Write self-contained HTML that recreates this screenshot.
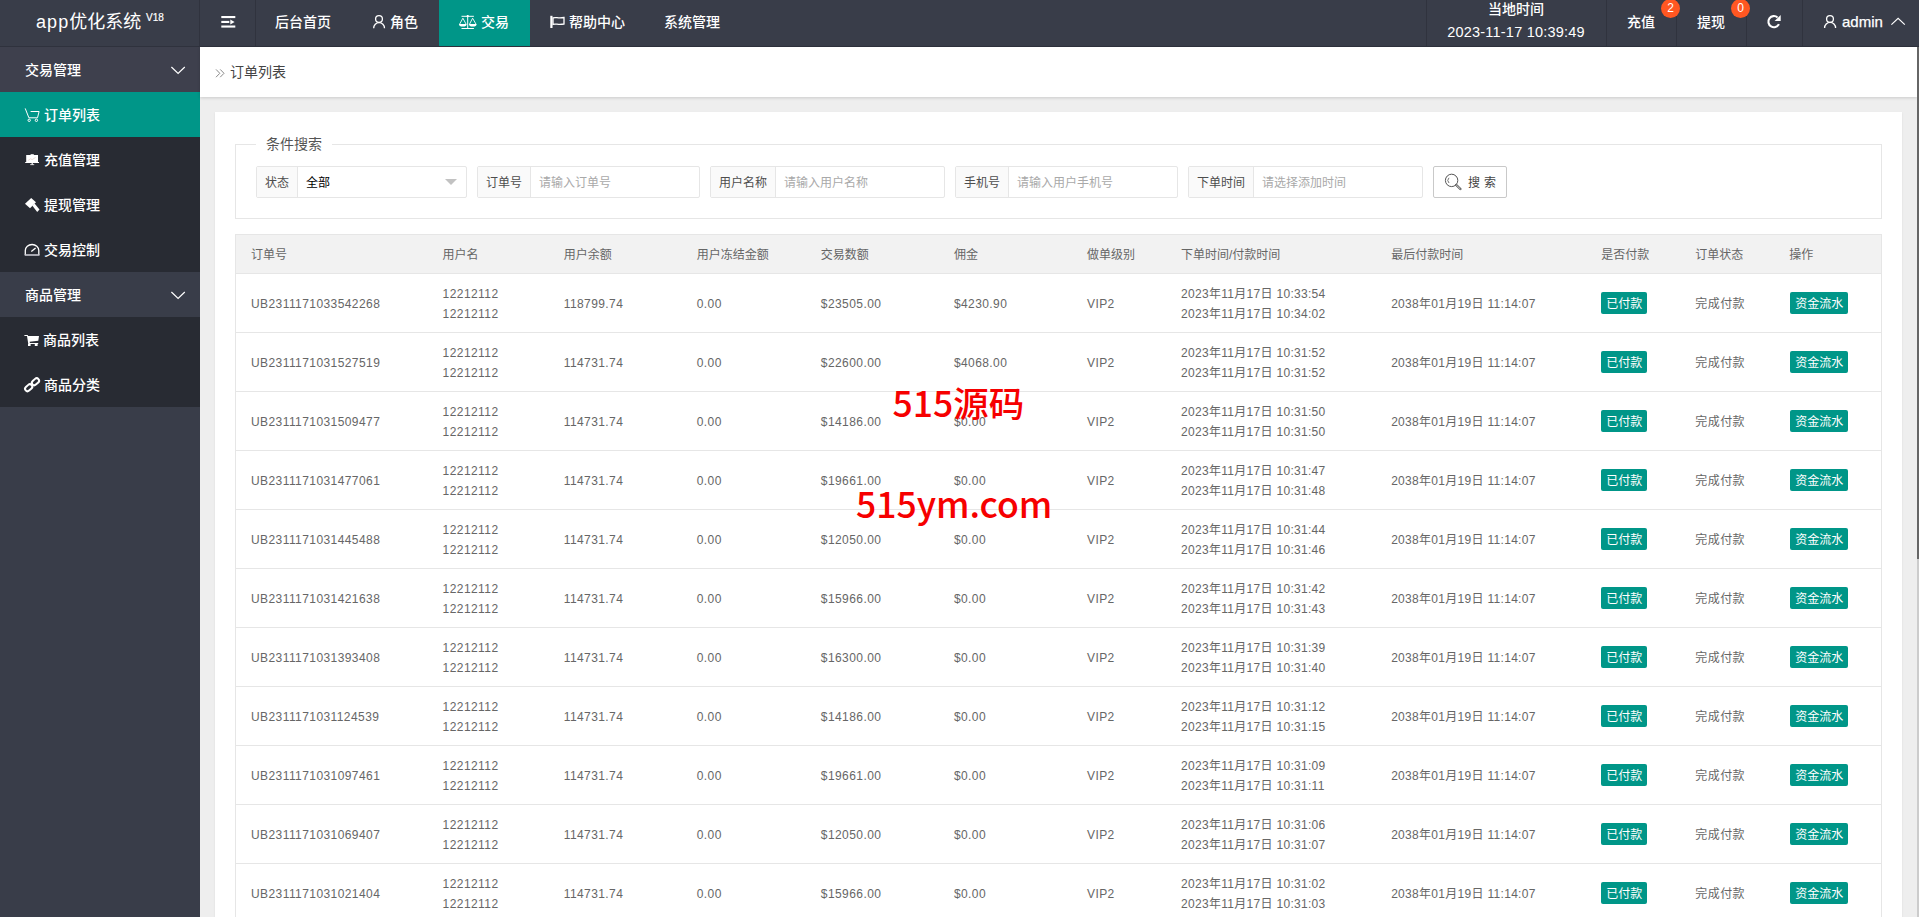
<!DOCTYPE html>
<html lang="zh-CN">
<head>
<meta charset="utf-8">
<title>订单列表</title>
<style>
*{box-sizing:border-box;margin:0;padding:0}
html,body{width:1919px;height:917px;overflow:hidden}
body{font-family:"Liberation Sans","Noto Sans CJK SC",sans-serif;font-size:14px;color:#333;background:#eee;position:relative}
svg{display:block}
/* header */
.hd{position:absolute;left:0;top:0;width:1919px;height:47px;background:#393d49;color:#fff;border-bottom:1px solid #2f323d}
.logo{position:absolute;left:0;top:0;width:200px;height:46px;border-right:1px solid #30333e;line-height:44px;font-size:18px;white-space:nowrap}
.logo span.t{position:absolute;left:36px;top:0}
.logo sup{position:absolute;left:146px;top:-4px;font-size:10px;font-weight:normal;-webkit-text-stroke:.2px #fff;line-height:44px}
.nav{position:absolute;top:0;height:46px;line-height:44px;font-size:14px;white-space:nowrap;font-weight:500}
.nav .ic{position:absolute}
.sep{position:absolute;top:0;width:1px;height:46px;background:#30333e}
.act{position:absolute;top:0;height:46px;background:#009688}
.badge{position:absolute;width:19px;height:19px;border-radius:10px;background:#ff5722;color:#fff;font-size:12px;line-height:19px;text-align:center}
/* side */
.side{position:absolute;left:0;top:47px;width:200px;height:870px;background:#393d49;color:#fff;font-weight:500}
.side .it{position:absolute;left:0;width:200px;height:45px;line-height:46px;font-size:14px;white-space:nowrap}
.side .p{background:#3e404d}
.side .c{background:#282b33}
.side .on{background:#009688}
.side .it span{position:absolute;top:0}
.side .it svg{position:absolute}
/* crumb */
.crumb{position:absolute;left:200px;top:47px;width:1717px;height:50px;background:#fff;box-shadow:0 1px 3px rgba(0,0,0,.15);line-height:51px;font-size:14px;color:#444}
.crumb span{position:absolute;left:30px;top:0}
.sb{position:absolute;left:1917px;top:47px;width:2px;height:870px;background:#ccc}
.sb i{display:block;width:2px;height:512px;background:#666}
/* card */
.card{position:absolute;left:215px;top:112px;width:1687px;height:820px;background:#fff;box-shadow:0 1px 2px rgba(0,0,0,.08)}
.fs{position:absolute;left:20px;top:32px;width:1647px;height:75px;border:1px solid #e6e6e6}
.lg{position:absolute;left:20px;top:-12px;background:#fff;padding:0 10px;font-size:14px;line-height:22px;color:#555}
.grp{position:absolute;top:21px;height:32px;border:1px solid #e6e6e6;border-radius:2px;background:#fff;font-size:12px;line-height:33px;white-space:nowrap}
.grp .lb{position:absolute;left:0;top:0;height:30px;overflow:hidden;background:#fafafa;border-right:1px solid #e6e6e6;padding:0 8px;color:#4d4d4d}
.grp .ph{position:absolute;top:0;color:#a9a9a9}
.grp .val{position:absolute;top:0;color:#000}
.sbtn{position:absolute;left:1197px;top:21px;width:74px;height:32px;border:1px solid #c9c9c9;border-radius:2px;background:#fff;font-size:12px;line-height:33px;color:#444}
/* table */
table{position:absolute;left:20px;top:122px;width:1647px;border-collapse:collapse;table-layout:fixed;border:1px solid #e6e6e6}
th{height:39px;background:#f2f2f2;font-weight:normal;text-align:left;font-size:12px;color:#666;padding:0 15px 2px;border-bottom:1px solid #e6e6e6;white-space:nowrap}
td{height:59px;padding:10px 15px 8px;font-size:12px;letter-spacing:.42px;line-height:20px;color:#666;border-bottom:1px solid #e6e6e6;white-space:nowrap;vertical-align:middle}
td.d{letter-spacing:.3px}
.btn{display:inline-block;position:relative;top:-1px;height:22px;line-height:25px;letter-spacing:0;padding:0 5px;background:#009688;color:#fff;font-size:12px;border-radius:2px;vertical-align:middle}
.wm{position:absolute;color:#f60000;font-family:"Noto Sans CJK SC","Liberation Sans",sans-serif;font-weight:500;white-space:nowrap}
</style>
</head>
<body>
<div class="hd">

  <svg class="ic" style="position:absolute;left:0;top:0;z-index:5" width="1919" height="47" viewBox="0 0 1919 47">
    <g fill="#fff">
      <rect x="221.3" y="16" width="14" height="2.1"/>
      <rect x="221.3" y="20.9" width="8" height="2.1"/>
      <rect x="221.3" y="25.5" width="14" height="2.1"/>
      <path d="M230.3 19.6 L234.6 22 L230.3 24.4 Z"/>
    </g>
    <g fill="none" stroke="#fff" stroke-width="1.3">
      <circle cx="379" cy="19" r="3.4"/>
      <path d="M373.7 28.2 A5.4 5.6 0 0 1 384.5 28.2"/>
      <circle cx="1830" cy="19" r="3.4"/>
      <path d="M1824.6 28 A5.5 5.6 0 0 1 1835.6 28"/>
      <path d="M1891.4 24.6 L1898.1 18.4 L1904.8 24.6" stroke-width="1.2"/>
    </g>
    <!-- scales -->
    <g fill="none" stroke="#fff" stroke-width="1">
      <path d="M461.5 16.3 H473.9 M467.7 15 V28.4 M461.5 28.5 H473.9"/>
      <path d="M459.6 24.2 L462.9 18.2 L466.1 24.2 M469.5 24.2 L472.6 18.2 L476 24.2" stroke-width="0.9"/>
    </g>
    <g fill="#fff">
      <path d="M459 24 H466.6 A3.8 2.6 0 0 1 459 24 Z M469 24 H476.6 A3.8 2.6 0 0 1 469 24 Z"/>
      <circle cx="467.7" cy="16.2" r="1.1"/>
    </g>
    <!-- flag -->
    <rect x="550.3" y="15.8" width="2.2" height="12.2" fill="#fff"/>
    <path d="M553 17.9 C556 16.8 558 18.8 564 17.5 V24 C558 25.3 556 23.3 553 24.4 Z" fill="none" stroke="#fff" stroke-width="1.3"/>
    <!-- refresh -->
    <path d="M1777.56 17.43 A5.55 5.55 0 1 0 1778.9 24.1" fill="none" stroke="#fff" stroke-width="2.1"/>
    <path d="M1780.7 15.1 V21.1 H1774.6 Z" fill="#fff"/>
  </svg>
  <div class="logo"><span class="t"><span style="letter-spacing:1.1px">app</span>优化系统</span><sup>V18</sup></div>
  <div class="sep" style="left:255px"></div>
  <div class="act" style="left:439px;width:91px"></div>
  <div class="nav" style="left:275px">后台首页</div>
  <div class="nav" style="left:390px">角色</div>
  <div class="nav" style="left:481px">交易</div>
  <div class="nav" style="left:569px">帮助中心</div>
  <div class="nav" style="left:664px">系统管理</div>
  <div class="sep" style="left:1426px"></div>
  <div class="sep" style="left:1606px"></div>
  <div class="sep" style="left:1676px"></div>
  <div class="sep" style="left:1746px"></div>
  <div class="sep" style="left:1802px"></div>
  <div class="nav" style="left:1426px;width:180px;text-align:center;line-height:18px;top:0">当地时间</div>
  <div class="nav" style="left:1426px;width:180px;text-align:center;line-height:18px;top:23px;font-size:14.5px;letter-spacing:.22px">2023-11-17 10:39:49</div>
  <div class="nav" style="left:1627px">充值</div>
  <div class="nav" style="left:1697px">提现</div>
  <div class="badge" style="left:1661px;top:-1px">2</div>
  <div class="badge" style="left:1731px;top:-1px">0</div>
  <div class="nav" style="left:1842px;font-size:15px;-webkit-text-stroke:.25px #fff">admin</div>
</div>

<div class="side">
  <svg style="position:absolute;left:0;top:0;z-index:5" width="200" height="420" viewBox="0 47 200 420">
    <g fill="none" stroke="#fff" stroke-width="1.2">
      <path d="M171.4 67 L178.1 73.4 L184.8 67"/>
      <path d="M171.4 292 L178.1 298.4 L184.8 292"/>
    </g>
    <!-- cart outline -->
    <g fill="none" stroke="#fff" stroke-width="1">
      <path d="M25.2 108.4 L28.9 117.8 H37.5 L39.1 111.5 H30.6"/>
      <circle cx="29.2" cy="120.3" r="1.2"/>
      <circle cx="36.4" cy="120.3" r="1.2"/>
    </g>
    <!-- board -->
    <g fill="#fff">
      <rect x="26.2" y="155" width="11.8" height="7.4"/>
      <rect x="25.2" y="162" width="13.8" height="1"/>
      <rect x="30.6" y="154.2" width="3.2" height="1"/>
      <rect x="31.6" y="163" width="1.2" height="1.6"/>
      <rect x="30.2" y="164.3" width="4" height="0.8"/>
    </g>
    <path d="M28.2 160.4 L30.4 158.8 L32.2 159.6 L35.6 157.4" fill="none" stroke="#d9b8b0" stroke-width="0.5"/>
    <!-- gavel -->
    <g fill="#fff">
      <path d="M25 203.8 L31.2 197.9 L36 202.3 L30 208.2 Z"/>
      <path d="M32.2 205.4 L34.6 203.6 L39.5 209.4 L37.2 212 Z"/>
    </g>
    <!-- gauge -->
    <path d="M25.3 255 V250.6 A6.75 6.1 0 0 1 38.8 250.6 V255" fill="none" stroke="#fff" stroke-width="1.3"/>
    <rect x="24.7" y="254.2" width="14.8" height="1.6" fill="#c9c7cf"/>
    <path d="M31.3 251.5 L35.6 248" fill="none" stroke="#fff" stroke-width="1.3"/>
    <!-- cart solid -->
    <g fill="#fff">
      <path d="M24.4 334.9 H27.6 L28.2 336 H39 L38.3 340.8 L29.6 341.8 L29.9 342.9 H38.2 V344 H28.3 L27 336 H24.4 Z"/>
      <rect x="28" y="344" width="2.6" height="2"/>
      <rect x="34.8" y="344" width="2.8" height="2"/>
    </g>
    <!-- link -->
    <g fill="none" stroke="#fff" stroke-width="2">
      <rect x="-3.9" y="-2.4" width="8" height="4.8" rx="2.4" transform="translate(28.6 387.8) rotate(-42)"/>
      <rect x="-3.9" y="-2.4" width="8" height="4.8" rx="2.4" transform="translate(35.4 381.8) rotate(-42)"/>
    </g>
  </svg>

  <div class="it p" style="top:0"><span style="left:25px">交易管理</span></div>
  <div class="it c on" style="top:45px"><span style="left:44px">订单列表</span></div>
  <div class="it c" style="top:90px"><span style="left:44px">充值管理</span></div>
  <div class="it c" style="top:135px"><span style="left:44px">提现管理</span></div>
  <div class="it c" style="top:180px"><span style="left:44px">交易控制</span></div>
  <div class="it" style="top:225px"><span style="left:25px">商品管理</span></div>
  <div class="it c" style="top:270px"><span style="left:43px">商品列表</span></div>
  <div class="it c" style="top:315px"><span style="left:44px">商品分类</span></div>
</div>

<div class="crumb"><svg style="position:absolute;left:0;top:0" width="40" height="50" viewBox="200 47 40 50"><path d="M216 69.4 L219.8 73.3 L216 77.2 M220.2 69.4 L224 73.3 L220.2 77.2" fill="none" stroke="#8a8a8a" stroke-width="1"/></svg><span>订单列表</span></div>
<div class="sb"><i></i></div>

<div class="card">
  <div class="fs">
    <div class="lg">条件搜索</div>
    <div class="grp" style="left:20px;width:211px"><div class="lb">状态</div><div class="val" style="left:49px">全部</div><i style="position:absolute;left:188px;top:12px;border:6px solid transparent;border-top-color:#c2c2c2;border-bottom:0"></i></div>
    <div class="grp" style="left:241px;width:223px"><div class="lb">订单号</div><div class="ph" style="left:61px">请输入订单号</div></div>
    <div class="grp" style="left:474px;width:235px"><div class="lb">用户名称</div><div class="ph" style="left:73px">请输入用户名称</div></div>
    <div class="grp" style="left:719px;width:223px"><div class="lb">手机号</div><div class="ph" style="left:61px">请输入用户手机号</div></div>
    <div class="grp" style="left:952px;width:235px"><div class="lb">下单时间</div><div class="ph" style="left:73px">请选择添加时间</div></div>
    <div class="sbtn"><svg style="position:absolute;left:-1px;top:-1px" width="74" height="32" viewBox="1433 166 74 32"><circle cx="1451.6" cy="180.4" r="6.2" fill="none" stroke="#555" stroke-width="1"/><path d="M1449 177.8 A3.7 3.7 0 0 0 1449 183" fill="none" stroke="#666" stroke-width="0.9"/><path d="M1456.3 185 L1460.4 189" fill="none" stroke="#555" stroke-width="2.4" stroke-linecap="round"/><path d="M1456.5 185.2 L1460.2 188.8" fill="none" stroke="#fff" stroke-width="0.8" stroke-linecap="round"/></svg><span style="position:absolute;left:34px;top:0;letter-spacing:4px">搜索</span></div>
  </div>
  <table>
    <colgroup><col style="width:192px"><col style="width:121px"><col style="width:133px"><col style="width:124px"><col style="width:133px"><col style="width:133px"><col style="width:94px"><col style="width:210px"><col style="width:210px"><col style="width:94px"><col style="width:94px"><col style="width:107px"></colgroup>
    <thead><tr><th>订单号</th><th>用户名</th><th>用户余额</th><th>用户冻结金额</th><th>交易数额</th><th>佣金</th><th>做单级别</th><th>下单时间/付款时间</th><th>最后付款时间</th><th>是否付款</th><th>订单状态</th><th>操作</th></tr></thead>
    <tbody>
<tr><td>UB2311171033542268</td><td>12212112<br>12212112</td><td>118799.74</td><td>0.00</td><td>$23505.00</td><td>$4230.90</td><td>VIP2</td><td class="d">2023年11月17日 10:33:54<br>2023年11月17日 10:34:02</td><td class="d">2038年01月19日 11:14:07</td><td><span class="btn">已付款</span></td><td>完成付款</td><td><span class="btn" style="left:1px">资金流水</span></td></tr>
<tr><td>UB2311171031527519</td><td>12212112<br>12212112</td><td>114731.74</td><td>0.00</td><td>$22600.00</td><td>$4068.00</td><td>VIP2</td><td class="d">2023年11月17日 10:31:52<br>2023年11月17日 10:31:52</td><td class="d">2038年01月19日 11:14:07</td><td><span class="btn">已付款</span></td><td>完成付款</td><td><span class="btn" style="left:1px">资金流水</span></td></tr>
<tr><td>UB2311171031509477</td><td>12212112<br>12212112</td><td>114731.74</td><td>0.00</td><td>$14186.00</td><td>$0.00</td><td>VIP2</td><td class="d">2023年11月17日 10:31:50<br>2023年11月17日 10:31:50</td><td class="d">2038年01月19日 11:14:07</td><td><span class="btn">已付款</span></td><td>完成付款</td><td><span class="btn" style="left:1px">资金流水</span></td></tr>
<tr><td>UB2311171031477061</td><td>12212112<br>12212112</td><td>114731.74</td><td>0.00</td><td>$19661.00</td><td>$0.00</td><td>VIP2</td><td class="d">2023年11月17日 10:31:47<br>2023年11月17日 10:31:48</td><td class="d">2038年01月19日 11:14:07</td><td><span class="btn">已付款</span></td><td>完成付款</td><td><span class="btn" style="left:1px">资金流水</span></td></tr>
<tr><td>UB2311171031445488</td><td>12212112<br>12212112</td><td>114731.74</td><td>0.00</td><td>$12050.00</td><td>$0.00</td><td>VIP2</td><td class="d">2023年11月17日 10:31:44<br>2023年11月17日 10:31:46</td><td class="d">2038年01月19日 11:14:07</td><td><span class="btn">已付款</span></td><td>完成付款</td><td><span class="btn" style="left:1px">资金流水</span></td></tr>
<tr><td>UB2311171031421638</td><td>12212112<br>12212112</td><td>114731.74</td><td>0.00</td><td>$15966.00</td><td>$0.00</td><td>VIP2</td><td class="d">2023年11月17日 10:31:42<br>2023年11月17日 10:31:43</td><td class="d">2038年01月19日 11:14:07</td><td><span class="btn">已付款</span></td><td>完成付款</td><td><span class="btn" style="left:1px">资金流水</span></td></tr>
<tr><td>UB2311171031393408</td><td>12212112<br>12212112</td><td>114731.74</td><td>0.00</td><td>$16300.00</td><td>$0.00</td><td>VIP2</td><td class="d">2023年11月17日 10:31:39<br>2023年11月17日 10:31:40</td><td class="d">2038年01月19日 11:14:07</td><td><span class="btn">已付款</span></td><td>完成付款</td><td><span class="btn" style="left:1px">资金流水</span></td></tr>
<tr><td>UB2311171031124539</td><td>12212112<br>12212112</td><td>114731.74</td><td>0.00</td><td>$14186.00</td><td>$0.00</td><td>VIP2</td><td class="d">2023年11月17日 10:31:12<br>2023年11月17日 10:31:15</td><td class="d">2038年01月19日 11:14:07</td><td><span class="btn">已付款</span></td><td>完成付款</td><td><span class="btn" style="left:1px">资金流水</span></td></tr>
<tr><td>UB2311171031097461</td><td>12212112<br>12212112</td><td>114731.74</td><td>0.00</td><td>$19661.00</td><td>$0.00</td><td>VIP2</td><td class="d">2023年11月17日 10:31:09<br>2023年11月17日 10:31:11</td><td class="d">2038年01月19日 11:14:07</td><td><span class="btn">已付款</span></td><td>完成付款</td><td><span class="btn" style="left:1px">资金流水</span></td></tr>
<tr><td>UB2311171031069407</td><td>12212112<br>12212112</td><td>114731.74</td><td>0.00</td><td>$12050.00</td><td>$0.00</td><td>VIP2</td><td class="d">2023年11月17日 10:31:06<br>2023年11月17日 10:31:07</td><td class="d">2038年01月19日 11:14:07</td><td><span class="btn">已付款</span></td><td>完成付款</td><td><span class="btn" style="left:1px">资金流水</span></td></tr>
<tr><td>UB2311171031021404</td><td>12212112<br>12212112</td><td>114731.74</td><td>0.00</td><td>$15966.00</td><td>$0.00</td><td>VIP2</td><td class="d">2023年11月17日 10:31:02<br>2023年11月17日 10:31:03</td><td class="d">2038年01月19日 11:14:07</td><td><span class="btn">已付款</span></td><td>完成付款</td><td><span class="btn" style="left:1px">资金流水</span></td></tr>
    </tbody>
  </table>
</div>
<div class="wm" style="left:892.5px;top:378.3px;font-size:35.5px;line-height:48px">515源码</div>
<div class="wm" style="left:856px;top:478.4px;font-size:35.5px;line-height:50px">515ym.com</div>
</body>
</html>
